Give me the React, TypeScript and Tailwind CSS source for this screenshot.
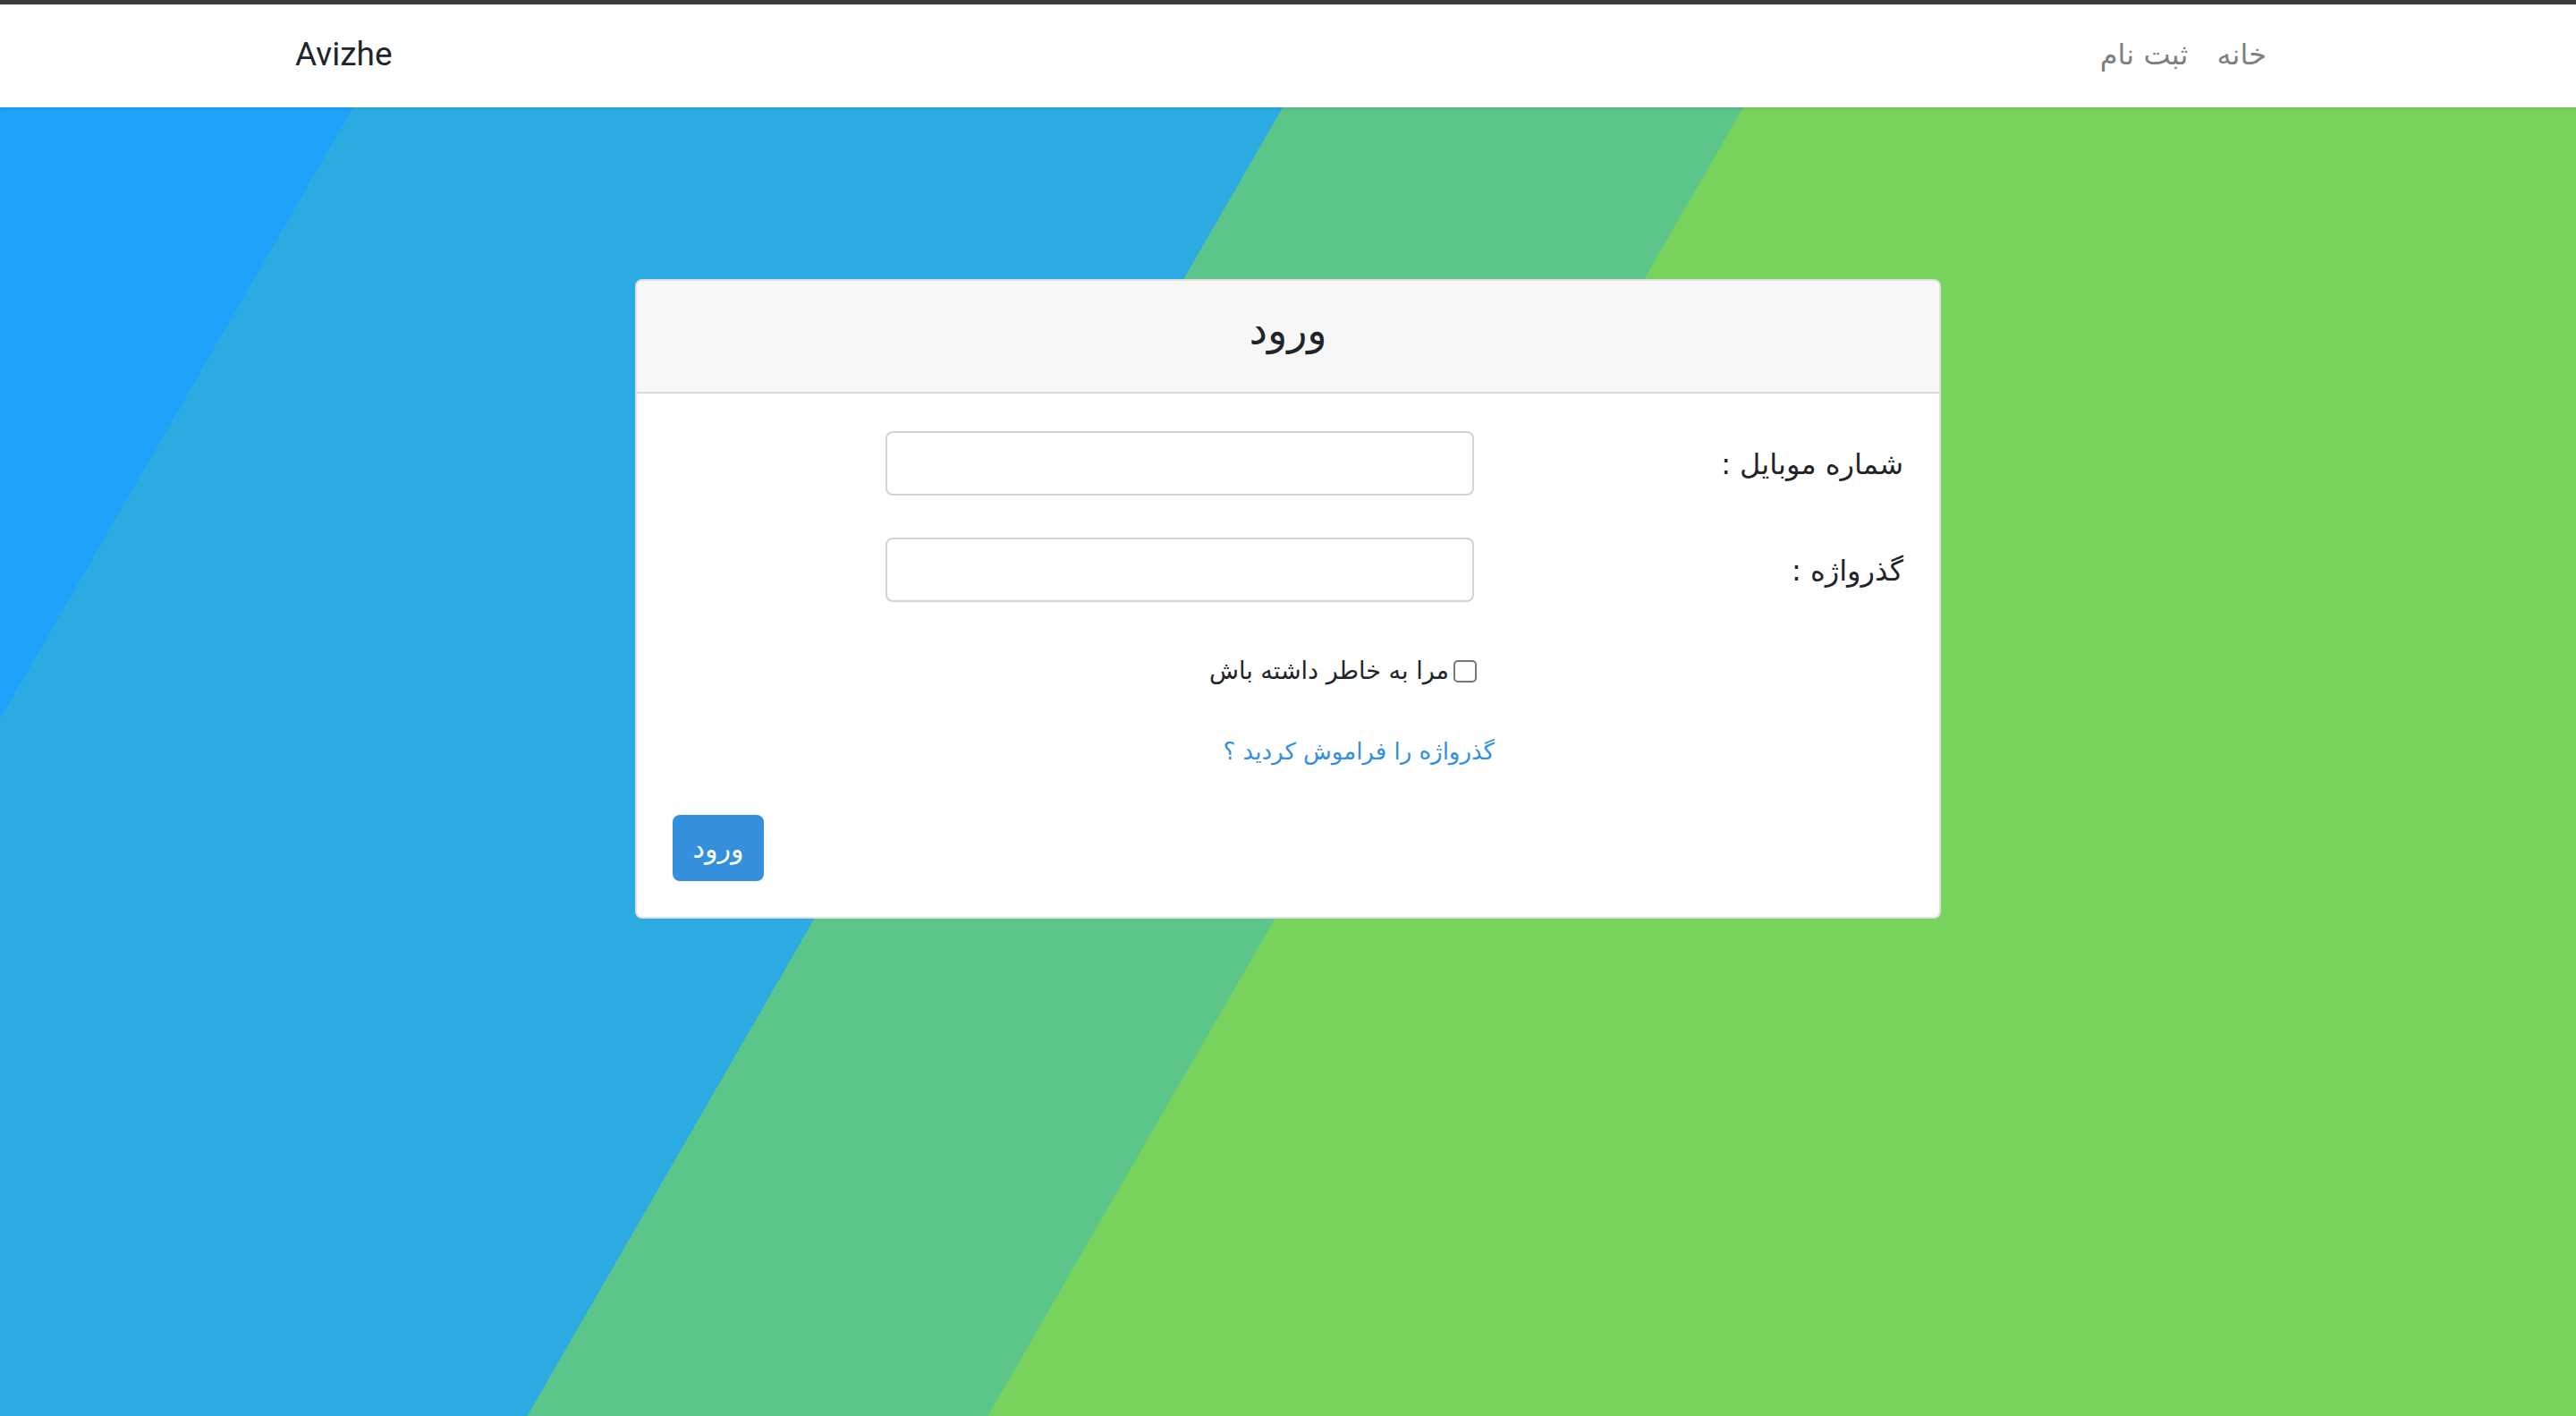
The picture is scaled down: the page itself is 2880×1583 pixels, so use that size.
import React from "react";

export default function App() {
  return (
    <div className="h-screen flex flex-col font-['DejaVu_Sans',sans-serif] text-[#212529]">
      <div className="h-[5px] bg-[#3a3b3d] shrink-0" />
      <nav className="h-[115px] shrink-0 bg-white relative z-10 shadow-[0_2px_4px_rgba(0,0,0,0.08)]">
        <div className="w-[2280px] mx-auto px-[30px] h-full flex items-center justify-between">
          <a className="text-[37px] font-['Roboto',sans-serif] text-[#212529] leading-none pb-[4px]">Avizhe</a>
          <ul dir="rtl" className="flex items-center pb-[4px]">
            <li>
              <a className="block px-[16px] text-[32px] text-[#808080]">خانه</a>
            </li>
            <li>
              <a className="block px-[16px] text-[32px] text-[#808080]">ثبت نام</a>
            </li>
          </ul>
        </div>
      </nav>
      <main className="flex-1 pt-[192px] bg-[linear-gradient(120deg,#1ea3fb_342px,#2cabe2_342px,#2cabe2_1242px,#5cc58a_1242px,#5cc58a_1688px,#78d35c_1688px)]">
        <div dir="rtl" className="w-[1460px] mx-auto bg-white border-2 border-[#dfdfdf] rounded-[8px] overflow-hidden">
          <div className="h-[126px] bg-[#f7f7f7] border-b-2 border-[#dcdcdc] flex items-center justify-center">
            <h3 className="text-[46px] font-medium leading-none pb-[14px]">ورود</h3>
          </div>
          <form className="px-[40px] pt-[42px] pb-[40px]">
            <div className="flex items-center h-[72px]">
              <label className="w-[480px] text-[32px] pt-[2px]">شماره موبایل :</label>
              <input
                type="text"
                className="w-[658px] h-[72px] border-2 border-[#ced4da] rounded-[8px] bg-white outline-none px-[24px]"
              />
            </div>
            <div className="flex items-center h-[72px] mt-[47px]">
              <label className="w-[480px] text-[32px] pt-[2px]">گذرواژه :</label>
              <input
                type="password"
                className="w-[658px] h-[72px] border-2 border-[#ced4da] rounded-[8px] bg-white outline-none px-[24px]"
              />
            </div>
            <div className="flex items-center h-[40px] mt-[57px] pr-[477px]">
              <input
                type="checkbox"
                className="appearance-none w-[26px] h-[25px] border-2 border-[#767676] rounded-[5px] bg-white m-0"
              />
              <label className="mr-[5px] text-[27px]">مرا به خاطر داشته باش</label>
            </div>
            <div className="flex items-center h-[40px] mt-[50px] pr-[457px]">
              <a className="text-[26px] text-[#3490dc]">گذرواژه را فراموش کردید ؟</a>
            </div>
            <div className="flex justify-end mt-[51px]">
              <button
                type="button"
                className="w-[102px] h-[74px] bg-[#3490dc] text-white text-[30px] rounded-[8px]"
              >
                ورود
              </button>
            </div>
          </form>
        </div>
      </main>
    </div>
  );
}
